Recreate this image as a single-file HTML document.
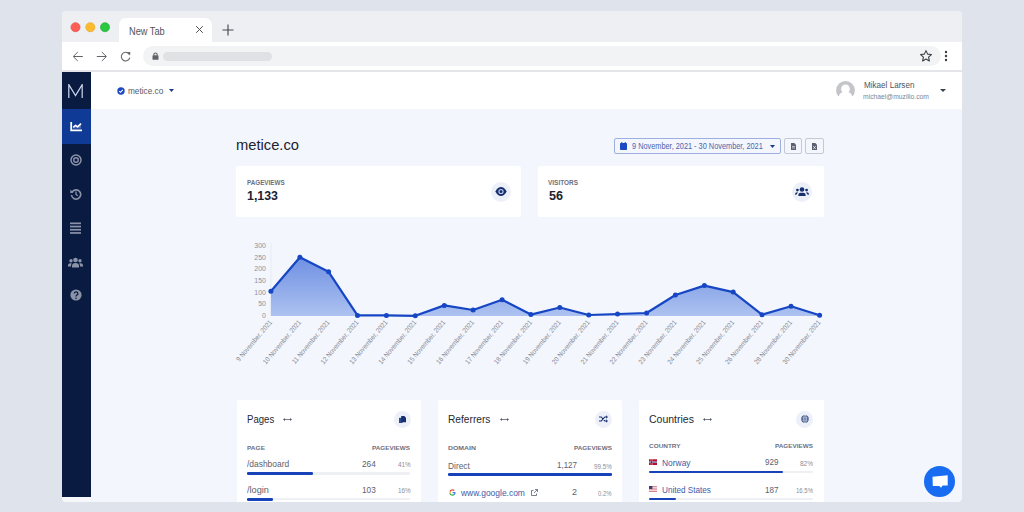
<!DOCTYPE html>
<html><head><meta charset="utf-8">
<style>
*{margin:0;padding:0;box-sizing:border-box}
html,body{width:1024px;height:512px;overflow:hidden;background:#dfe3eb;font-family:"Liberation Sans",sans-serif;position:relative}
.a{position:absolute}
.t{position:absolute;white-space:nowrap;line-height:normal;transform-origin:0 0}
</style></head><body>
<div style="position:absolute;left:0;top:0;width:1024px;height:512px;clip-path:inset(11px 62px 10px 62px round 3px 3px 4px 4px)">
<div class="a" style="left:62px;top:11px;width:900px;height:491px;background:#f3f6fd;border-radius:3px 3px 4px 4px"></div>
<div class="a" style="left:62px;top:11px;width:900px;height:31px;background:#edeff2;border-radius:3px 3px 0 0"></div>
<svg class="a" style="left:62px;top:12px;" width="60" height="30" viewBox="0 0 60 30"><circle cx="13.5" cy="15.2" r="4.55" fill="#fd5f57" stroke="#e2463f" stroke-width="0.6"/><circle cx="28.299999999999997" cy="15.2" r="4.55" fill="#febb2e" stroke="#e1a116" stroke-width="0.6"/><circle cx="43" cy="15.2" r="4.55" fill="#28c840" stroke="#1aac2c" stroke-width="0.6"/></svg>
<div class="a" style="left:119px;top:17.5px;width:93px;height:24.5px;background:#fff;border-radius:7px 7px 0 0"></div>
<div class="t" style="left:129.30px;top:25.55px;font-size:10px;color:#505459;font-weight:normal;transform:scaleX(0.9213);">New Tab</div>
<svg class="a" style="left:195px;top:25px;" width="9" height="9" viewBox="0 0 9 9"><path d="M1.2 1.2L7.8 7.8M7.8 1.2L1.2 7.8" stroke="#45494e" stroke-width="0.95"/></svg>
<svg class="a" style="left:222px;top:24px;" width="12" height="12" viewBox="0 0 12 12"><path d="M6 0.5V11.5M0.5 6H11.5" stroke="#45494e" stroke-width="1.15"/></svg>
<div class="a" style="left:62px;top:42px;width:900px;height:28px;background:#fff;"></div>
<div class="a" style="left:62px;top:70px;width:900px;height:2px;background:#e3e5e9;"></div>
<svg class="a" style="left:72px;top:51px;" width="12" height="11" viewBox="0 0 12 11"><path d="M10.8 5.5H1.5M5.8 1L1.2 5.5L5.8 10" stroke="#606469" stroke-width="1.0" fill="none"/></svg>
<svg class="a" style="left:95.5px;top:51px;" width="12" height="11" viewBox="0 0 12 11"><path d="M0.8 5.5H10.1M5.8 1L10.4 5.5L5.8 10" stroke="#606469" stroke-width="1.0" fill="none"/></svg>
<svg class="a" style="left:120px;top:51px;" width="11" height="11" viewBox="0 0 11 11"><path d="M9.1 3.1A4.3 4.3 0 1 0 9.8 6.6" stroke="#606469" stroke-width="1.05" fill="none"/><path d="M6.8 1.2L10.3 0.9L10.1 4.6z" fill="#606469"/></svg>
<div class="a" style="left:142.5px;top:46px;width:798.5px;height:20px;background:#f1f3f4;border-radius:10px"></div>
<svg class="a" style="left:151.5px;top:52px;" width="7" height="8" viewBox="0 0 7 8"><rect x="0.5" y="3.3" width="6" height="4.5" rx="0.6" fill="#5f6368"/><path d="M1.9 3.6V2.6A1.6 1.6 0 0 1 5.1 2.6V3.6" stroke="#5f6368" stroke-width="1.1" fill="none"/></svg>
<div class="a" style="left:162.7px;top:51.8px;width:109.0px;height:8.800000000000004px;background:#dfe1e4;border-radius:5px"></div>
<svg class="a" style="left:919px;top:49px;" width="14" height="14" viewBox="0 0 24 24"><path d="M12 2.8l2.8 6 6.5.7-4.9 4.4 1.4 6.5L12 17.1l-5.8 3.3 1.4-6.5-4.9-4.4 6.5-.7z" stroke="#3c4043" stroke-width="1.9" fill="none" stroke-linejoin="round"/></svg>
<svg class="a" style="left:944px;top:50px;" width="4" height="12" viewBox="0 0 4 12"><circle cx="2" cy="2" r="1.2" fill="#3c4043"/><circle cx="2" cy="6" r="1.2" fill="#3c4043"/><circle cx="2" cy="10" r="1.2" fill="#3c4043"/></svg>
<div class="a" style="left:62px;top:72px;width:29px;height:425px;background:#0a1b41;"></div>
<div class="a" style="left:62px;top:72px;width:29px;height:37px;background:#0a1b41;"></div>
<svg class="a" style="left:68px;top:84px;" width="15" height="14" viewBox="0 0 15 14"><path d="M0.8 14V0.6L7.5 11.5L14.2 0.6V14" stroke="#c9d1ea" stroke-width="1.25" fill="none" stroke-linejoin="miter"/></svg>
<div class="a" style="left:62px;top:109px;width:29px;height:35px;background:#0f3a96;"></div>
<svg class="a" style="left:69.5px;top:122px;" width="12.5" height="9.5" viewBox="0 0 12.5 9.5"><path d="M1.2 0V8.3H12" stroke="#fff" stroke-width="1.8" fill="none"/><path d="M3.2 5.4L5.6 3.3L7.6 4.8L11 1.6" stroke="#fff" stroke-width="1.6" fill="none" stroke-linejoin="round"/><path d="M3.2 6.2L5.6 4.2L7.6 5.6L11 2.5V6.6H3.2z" fill="#fff" opacity="0.25"/></svg>
<svg class="a" style="left:69.5px;top:154px;" width="12" height="12" viewBox="0 0 12 12"><circle cx="6" cy="6" r="5" stroke="#8b93a8" stroke-width="1.5" fill="none"/><circle cx="6" cy="6" r="2.3" stroke="#8b93a8" stroke-width="1.4" fill="none"/></svg>
<svg class="a" style="left:69.5px;top:187.5px;" width="12" height="12" viewBox="0 0 12 12"><path d="M2.2 4A4.6 4.6 0 1 1 1.5 7" stroke="#8b93a8" stroke-width="1.6" fill="none"/><path d="M0.3 1.5L3.5 4.8L0.3 5.2z" fill="#8b93a8"/><path d="M6 3.5V6.5L7.8 7.8" stroke="#8b93a8" stroke-width="1.3" fill="none"/></svg>
<svg class="a" style="left:70px;top:222px;" width="11" height="12" viewBox="0 0 11 12"><rect x="0" y="0.5" width="11" height="1.7" fill="#8b93a8"/><rect x="0" y="3.7" width="11" height="1.7" fill="#8b93a8"/><rect x="0" y="6.9" width="11" height="1.7" fill="#8b93a8"/><rect x="0" y="10.1" width="11" height="1.7" fill="#8b93a8"/></svg>
<svg class="a" style="left:68px;top:257px;" width="15" height="11" viewBox="0 0 15 11"><circle cx="7.5" cy="3" r="2.3" fill="#8b93a8"/><circle cx="3" cy="3.8" r="1.7" fill="#8b93a8"/><circle cx="12" cy="3.8" r="1.7" fill="#8b93a8"/><path d="M4 10.5V9A3.5 3 0 0 1 11 9V10.5z" fill="#8b93a8"/><path d="M0 9.5V8.5A2.5 2.2 0 0 1 3.8 6.5A4 4 0 0 0 3 9.5z" fill="#8b93a8"/><path d="M15 9.5V8.5A2.5 2.2 0 0 0 11.2 6.5A4 4 0 0 1 12 9.5z" fill="#8b93a8"/></svg>
<svg class="a" style="left:70px;top:289px;" width="12" height="12" viewBox="0 0 12 12"><circle cx="6" cy="6" r="5.6" fill="#8b93a8"/><path d="M4.3 4.6A1.8 1.7 0 1 1 6.8 6.2C6.2 6.6 6 6.9 6 7.5" stroke="#0a1b41" stroke-width="1.3" fill="none"/><circle cx="6" cy="9.2" r="0.8" fill="#0a1b41"/></svg>
<div class="a" style="left:91px;top:72px;width:871px;height:37px;background:#fff;"></div>
<svg class="a" style="left:117px;top:86.8px;" width="8" height="8" viewBox="0 0 8 8"><circle cx="4" cy="4" r="3.7" fill="#1d48c4"/><path d="M2.2 4.1L3.5 5.3L5.8 2.9" stroke="#fff" stroke-width="1.1" fill="none"/></svg>
<div class="t" style="left:128.00px;top:84.81px;font-size:9.6px;color:#545a66;font-weight:normal;transform:scaleX(0.8591);">metice.co</div>
<svg class="a" style="left:168.5px;top:88.5px;" width="5" height="3" viewBox="0 0 5 3"><path d="M0 0H5L2.5 3z" fill="#1b3a8c"/></svg>
<svg class="a" style="left:836px;top:80.5px;" width="19" height="19" viewBox="0 0 19 19"><circle cx="9.5" cy="9.4" r="9.4" fill="#c4c5c8"/><rect x="0" y="15.3" width="19" height="4" fill="#fff"/><circle cx="9.5" cy="7.9" r="4.4" fill="#fff"/><path d="M2.8 16A6.7 5.5 0 0 1 16.2 16z" fill="#fff"/></svg>
<div class="t" style="left:863.50px;top:79.97px;font-size:9.2px;color:#50545d;font-weight:normal;transform:scaleX(0.8818);">Mikael Larsen</div>
<div class="t" style="left:863.00px;top:92.40px;font-size:7.4px;color:#80848e;font-weight:normal;transform:scaleX(0.9157);">michael@muzillo.com</div>
<svg class="a" style="left:940px;top:88.5px;" width="6" height="3" viewBox="0 0 6 3"><path d="M0 0H6L3 3z" fill="#3c4049"/></svg>
<div class="t" style="left:236.00px;top:136.47px;font-size:15.5px;color:#1e2230;font-weight:normal;transform:scaleX(0.9497);">metice.co</div>
<div class="a" style="left:613.5px;top:137.9px;width:167.5px;height:15.900000000000006px;background:#f3f6fd;border:1px solid #9cafe0;border-radius:2px"></div>
<svg class="a" style="left:619.5px;top:141.5px;" width="7" height="8" viewBox="0 0 7 8"><rect x="0" y="1" width="7" height="7" rx="0.8" fill="#1d48c4"/><rect x="1.3" y="0" width="1" height="2" fill="#1d48c4"/><rect x="4.7" y="0" width="1" height="2" fill="#1d48c4"/></svg>
<div class="t" style="left:632.00px;top:141.58px;font-size:8.2px;color:#4a66b0;font-weight:normal;transform:scaleX(0.8980);">9 November, 2021 - 30 November, 2021</div>
<svg class="a" style="left:770px;top:145px;" width="5" height="3" viewBox="0 0 5 3"><path d="M0 0H5L2.5 3z" fill="#1b3a8c"/></svg>
<div class="a" style="left:783.7px;top:137.9px;width:18.299999999999955px;height:15.900000000000006px;background:#f3f6fd;border:1px solid #c3c9d6;border-radius:2px"></div>
<div class="a" style="left:805px;top:137.9px;width:18.5px;height:15.900000000000006px;background:#f3f6fd;border:1px solid #c3c9d6;border-radius:2px"></div>
<svg class="a" style="left:790.5px;top:142.8px;" width="5" height="7" viewBox="0 0 5 7"><path d="M0 0H3.3L5 1.7V7H0z" fill="#5b6170"/><path d="M1 3.5H4M1 5H4" stroke="#f3f6fd" stroke-width="0.6"/></svg>
<svg class="a" style="left:811.5px;top:142.8px;" width="5" height="7" viewBox="0 0 5 7"><path d="M0 0H3.3L5 1.7V7H0z" fill="#5b6170"/><path d="M1.2 3L3.8 6M3.8 3L1.2 6" stroke="#f3f6fd" stroke-width="0.7"/></svg>
<div class="a" style="left:236px;top:166.4px;width:285.4px;height:50.5px;background:#fff;border-radius:2px"></div>
<div class="t" style="left:246.50px;top:178.92px;font-size:6.5px;color:#6c7080;font-weight:bold;transform:scaleX(0.9665);">PAGEVIEWS</div>
<div class="t" style="left:247.00px;top:188.54px;font-size:12px;color:#1e2230;font-weight:bold;transform:scaleX(1.0313);">1,133</div>
<div class="a" style="left:490.5px;top:181.5px;width:20px;height:20px;border-radius:50%;background:#edf0f8"></div>
<div class="a" style="left:537.5px;top:166.4px;width:286.0px;height:50.5px;background:#fff;border-radius:2px"></div>
<div class="t" style="left:548.00px;top:178.92px;font-size:6.5px;color:#6c7080;font-weight:bold;transform:scaleX(0.9926);">VISITORS</div>
<div class="t" style="left:548.50px;top:188.54px;font-size:12px;color:#1e2230;font-weight:bold;transform:scaleX(1.0511);">56</div>
<div class="a" style="left:791.5px;top:181.5px;width:20px;height:20px;border-radius:50%;background:#edf0f8"></div>
<svg class="a" style="left:494.5px;top:187px;" width="12" height="9" viewBox="0 0 12 9"><path d="M0.3 4.5C2 1.2 4 0 6 0S10 1.2 11.7 4.5C10 7.8 8 9 6 9S2 7.8 0.3 4.5z" fill="#16306f"/><circle cx="6" cy="4.5" r="2.6" fill="#c7d0ea"/><circle cx="6" cy="4.5" r="1.5" fill="#16306f"/></svg>
<svg class="a" style="left:795.2px;top:186.6px;" width="14" height="9.5" viewBox="0 0 15 10"><circle cx="7.5" cy="2.6" r="2.5" fill="#16306f"/><circle cx="2.6" cy="3.2" r="1.5" fill="#16306f"/><circle cx="12.4" cy="3.2" r="1.5" fill="#16306f"/><path d="M3.6 10V8.6A2.6 2.6 0 0 1 6.2 6H8.8A2.6 2.6 0 0 1 11.4 8.6V10z" fill="#16306f"/><path d="M0 8.2A2.4 2.4 0 0 1 2.4 5.6H3.2A3.8 3.8 0 0 0 2.2 7.6z" fill="#16306f"/><path d="M15 8.2A2.4 2.4 0 0 0 12.6 5.6H11.8A3.8 3.8 0 0 1 12.8 7.6z" fill="#16306f"/></svg>
<svg class="a" style="left:0;top:0" width="1024" height="512" viewBox="0 0 1024 512" font-family="Liberation Sans"><defs><linearGradient id="gf" x1="0" y1="0" x2="0" y2="1" gradientUnits="objectBoundingBox"><stop offset="0" stop-color="#6f90e3"/><stop offset="1" stop-color="#adc2f0"/></linearGradient></defs><text x="266" y="247.90" text-anchor="end" font-size="7" fill="#8e929b">300</text><text x="266" y="259.58" text-anchor="end" font-size="7" fill="#8e929b">250</text><text x="266" y="271.27" text-anchor="end" font-size="7" fill="#8e929b">200</text><text x="266" y="282.95" text-anchor="end" font-size="7" fill="#8e929b">150</text><text x="266" y="294.63" text-anchor="end" font-size="7" fill="#8e929b">100</text><text x="266" y="306.32" text-anchor="end" font-size="7" fill="#8e929b">50</text><text x="266" y="318.00" text-anchor="end" font-size="7" fill="#8e929b">0</text><line x1="270.9" y1="243" x2="270.9" y2="316" stroke="#e6e8ee" stroke-width="0.7"/><path d="M270.9,316.0 L270.9,291.3 299.9,257.2 328.6,271.8 357.5,315.4 386.4,315.4 415.3,315.8 444.3,305.4 473.1,310 502.1,299.8 530.9,314.6 559.8,307.5 588.75,315 617.5,314 646.6,313 675.4,295 704.4,285.6 733.2,292.1 762,314.7 791,306.2 819.6,315.2 L819.6,316.0 Z" fill="url(#gf)"/><polyline points="270.9,291.3 299.9,257.2 328.6,271.8 357.5,315.4 386.4,315.4 415.3,315.8 444.3,305.4 473.1,310 502.1,299.8 530.9,314.6 559.8,307.5 588.75,315 617.5,314 646.6,313 675.4,295 704.4,285.6 733.2,292.1 762,314.7 791,306.2 819.6,315.2" fill="none" stroke="#1646c4" stroke-width="2.2" stroke-linejoin="round"/><circle cx="270.9" cy="291.3" r="2.5" fill="#1646c4"/><circle cx="299.9" cy="257.2" r="2.5" fill="#1646c4"/><circle cx="328.6" cy="271.8" r="2.5" fill="#1646c4"/><circle cx="357.5" cy="315.4" r="2.5" fill="#1646c4"/><circle cx="386.4" cy="315.4" r="2.5" fill="#1646c4"/><circle cx="415.3" cy="315.8" r="2.5" fill="#1646c4"/><circle cx="444.3" cy="305.4" r="2.5" fill="#1646c4"/><circle cx="473.1" cy="310" r="2.5" fill="#1646c4"/><circle cx="502.1" cy="299.8" r="2.5" fill="#1646c4"/><circle cx="530.9" cy="314.6" r="2.5" fill="#1646c4"/><circle cx="559.8" cy="307.5" r="2.5" fill="#1646c4"/><circle cx="588.75" cy="315" r="2.5" fill="#1646c4"/><circle cx="617.5" cy="314" r="2.5" fill="#1646c4"/><circle cx="646.6" cy="313" r="2.5" fill="#1646c4"/><circle cx="675.4" cy="295" r="2.5" fill="#1646c4"/><circle cx="704.4" cy="285.6" r="2.5" fill="#1646c4"/><circle cx="733.2" cy="292.1" r="2.5" fill="#1646c4"/><circle cx="762" cy="314.7" r="2.5" fill="#1646c4"/><circle cx="791" cy="306.2" r="2.5" fill="#1646c4"/><circle cx="819.6" cy="315.2" r="2.5" fill="#1646c4"/><text transform="translate(272.40,322.5) rotate(-50)" text-anchor="end" font-size="6.9" textLength="51.47" lengthAdjust="spacingAndGlyphs" fill="#868a94">9 November, 2021</text><text transform="translate(301.40,322.5) rotate(-50)" text-anchor="end" font-size="6.9" textLength="55.00" lengthAdjust="spacingAndGlyphs" fill="#868a94">10 November, 2021</text><text transform="translate(330.10,322.5) rotate(-50)" text-anchor="end" font-size="6.9" textLength="54.53" lengthAdjust="spacingAndGlyphs" fill="#868a94">11 November, 2021</text><text transform="translate(359.00,322.5) rotate(-50)" text-anchor="end" font-size="6.9" textLength="55.00" lengthAdjust="spacingAndGlyphs" fill="#868a94">12 November, 2021</text><text transform="translate(387.90,322.5) rotate(-50)" text-anchor="end" font-size="6.9" textLength="55.00" lengthAdjust="spacingAndGlyphs" fill="#868a94">13 November, 2021</text><text transform="translate(416.80,322.5) rotate(-50)" text-anchor="end" font-size="6.9" textLength="55.00" lengthAdjust="spacingAndGlyphs" fill="#868a94">14 November, 2021</text><text transform="translate(445.80,322.5) rotate(-50)" text-anchor="end" font-size="6.9" textLength="55.00" lengthAdjust="spacingAndGlyphs" fill="#868a94">15 November, 2021</text><text transform="translate(474.60,322.5) rotate(-50)" text-anchor="end" font-size="6.9" textLength="55.00" lengthAdjust="spacingAndGlyphs" fill="#868a94">16 November, 2021</text><text transform="translate(503.60,322.5) rotate(-50)" text-anchor="end" font-size="6.9" textLength="55.00" lengthAdjust="spacingAndGlyphs" fill="#868a94">17 November, 2021</text><text transform="translate(532.40,322.5) rotate(-50)" text-anchor="end" font-size="6.9" textLength="55.00" lengthAdjust="spacingAndGlyphs" fill="#868a94">18 November, 2021</text><text transform="translate(561.30,322.5) rotate(-50)" text-anchor="end" font-size="6.9" textLength="55.00" lengthAdjust="spacingAndGlyphs" fill="#868a94">19 November, 2021</text><text transform="translate(590.25,322.5) rotate(-50)" text-anchor="end" font-size="6.9" textLength="55.00" lengthAdjust="spacingAndGlyphs" fill="#868a94">20 November, 2021</text><text transform="translate(619.00,322.5) rotate(-50)" text-anchor="end" font-size="6.9" textLength="55.00" lengthAdjust="spacingAndGlyphs" fill="#868a94">21 November, 2021</text><text transform="translate(648.10,322.5) rotate(-50)" text-anchor="end" font-size="6.9" textLength="55.00" lengthAdjust="spacingAndGlyphs" fill="#868a94">22 November, 2021</text><text transform="translate(676.90,322.5) rotate(-50)" text-anchor="end" font-size="6.9" textLength="55.00" lengthAdjust="spacingAndGlyphs" fill="#868a94">23 November, 2021</text><text transform="translate(705.90,322.5) rotate(-50)" text-anchor="end" font-size="6.9" textLength="55.00" lengthAdjust="spacingAndGlyphs" fill="#868a94">24 November, 2021</text><text transform="translate(734.70,322.5) rotate(-50)" text-anchor="end" font-size="6.9" textLength="55.00" lengthAdjust="spacingAndGlyphs" fill="#868a94">25 November, 2021</text><text transform="translate(763.50,322.5) rotate(-50)" text-anchor="end" font-size="6.9" textLength="55.00" lengthAdjust="spacingAndGlyphs" fill="#868a94">26 November, 2021</text><text transform="translate(792.50,322.5) rotate(-50)" text-anchor="end" font-size="6.9" textLength="55.00" lengthAdjust="spacingAndGlyphs" fill="#868a94">28 November, 2021</text><text transform="translate(821.10,322.5) rotate(-50)" text-anchor="end" font-size="6.9" textLength="55.00" lengthAdjust="spacingAndGlyphs" fill="#868a94">30 November, 2021</text></svg>
<div class="a" style="left:236.5px;top:400px;width:184.5px;height:102px;background:#fff;border-radius:2px 2px 0 0"></div>
<div class="t" style="left:247.20px;top:414.39px;font-size:10.4px;color:#252932;font-weight:normal;transform:scaleX(0.9225);">Pages</div>
<svg class="a" style="left:283.4px;top:417px;" width="9" height="5" viewBox="0 0 9 5"><path d="M1.8 2.5H7.2" stroke="#555a66" stroke-width="0.8"/><path d="M0 2.5L2 0.9V4.1z M9 2.5L7 0.9V4.1z" fill="#555a66"/></svg>
<div class="a" style="left:394.0px;top:410.7px;width:17px;height:17px;border-radius:50%;background:#edf0f8"></div>
<svg class="a" style="left:398.6px;top:415.5px" width="7" height="7.5" viewBox="0 0 7 7.5"><path d="M0 1.8H3.5V7.5H0z" fill="#2c4a8f"/><path d="M2.2 0H5.3L7 1.7V6.3H2.2z" fill="#16306f"/></svg>
<div class="t" style="left:247.20px;top:444.56px;font-size:5.9px;color:#6c7080;font-weight:bold;transform:scaleX(1.1054);">PAGE</div>
<div class="t" style="left:372.30px;top:444.56px;font-size:5.9px;color:#6c7080;font-weight:bold;transform:scaleX(1.0761);">PAGEVIEWS</div>
<div class="t" style="left:247.20px;top:459.32px;font-size:8.6px;color:#5d616c;font-weight:normal;transform:scaleX(0.9804);">/dashboard</div>
<div class="t" style="left:361.70px;top:459.12px;font-size:8.6px;color:#5d616c;font-weight:normal;transform:scaleX(0.9609);">264</div>
<div class="t" style="left:397.60px;top:461.31px;font-size:6.4px;color:#8a8e98;font-weight:normal;transform:scaleX(0.9922);">41%</div>
<div class="a" style="left:247.2px;top:472.40000000000003px;width:163.10000000000002px;height:2.3999999999999773px;background:#eef0f4;border-radius:1.2px"></div>
<div class="a" style="left:247.2px;top:472.3px;width:66.0555px;height:2.6000000000000227px;background:#1843b8;border-radius:1.3px"></div>
<div class="t" style="left:247.20px;top:485.32px;font-size:8.6px;color:#5d616c;font-weight:normal;transform:scaleX(1.0655);">/login</div>
<div class="t" style="left:361.70px;top:485.12px;font-size:8.6px;color:#5d616c;font-weight:normal;transform:scaleX(0.9609);">103</div>
<div class="t" style="left:397.60px;top:487.31px;font-size:6.4px;color:#8a8e98;font-weight:normal;transform:scaleX(0.9922);">16%</div>
<div class="a" style="left:247.2px;top:498.1px;width:163.10000000000002px;height:2.3999999999999773px;background:#eef0f4;border-radius:1.2px"></div>
<div class="a" style="left:247.2px;top:498.0px;width:25.60669999999999px;height:2.6000000000000227px;background:#1843b8;border-radius:1.3px"></div>
<div class="a" style="left:437.5px;top:400px;width:184.89999999999998px;height:102px;background:#fff;border-radius:2px 2px 0 0"></div>
<div class="t" style="left:448.20px;top:414.39px;font-size:10.4px;color:#252932;font-weight:normal;transform:scaleX(0.9800);">Referrers</div>
<svg class="a" style="left:499.7px;top:417px;" width="9" height="5" viewBox="0 0 9 5"><path d="M1.8 2.5H7.2" stroke="#555a66" stroke-width="0.8"/><path d="M0 2.5L2 0.9V4.1z M9 2.5L7 0.9V4.1z" fill="#555a66"/></svg>
<div class="a" style="left:594.6px;top:410.7px;width:17px;height:17px;border-radius:50%;background:#edf0f8"></div>
<svg class="a" style="left:598.6px;top:415.3px" width="9" height="8" viewBox="0 0 10 9"><path d="M0 2.2H2.5L6.5 6.8H8.5M0 6.8H2.5L6.5 2.2H8.5" stroke="#16306f" stroke-width="1.3" fill="none"/><path d="M8 0.3L10 2.2L8 4.1z M8 4.9L10 6.8L8 8.7z" fill="#16306f"/></svg>
<div class="t" style="left:448.20px;top:444.56px;font-size:5.9px;color:#6c7080;font-weight:bold;transform:scaleX(1.1703);">DOMAIN</div>
<div class="t" style="left:573.70px;top:444.56px;font-size:5.9px;color:#6c7080;font-weight:bold;transform:scaleX(1.0761);">PAGEVIEWS</div>
<div class="t" style="left:448.20px;top:460.62px;font-size:8.6px;color:#5d616c;font-weight:normal;transform:scaleX(0.9712);">Direct</div>
<div class="t" style="left:556.90px;top:460.42px;font-size:8.6px;color:#5d616c;font-weight:normal;transform:scaleX(0.9284);">1,127</div>
<div class="t" style="left:594.00px;top:462.61px;font-size:6.4px;color:#8a8e98;font-weight:normal;transform:scaleX(0.9755);">99.5%</div>
<div class="a" style="left:448.2px;top:473.3px;width:163.49999999999994px;height:2.3999999999999773px;background:#eef0f4;border-radius:1.2px"></div>
<div class="a" style="left:448.2px;top:473.2px;width:163.49999999999994px;height:2.6000000000000227px;background:#1843b8;border-radius:1.3px"></div>
<svg class="a" style="left:449.0px;top:488.8px" width="7" height="7" viewBox="0 0 24 24"><path d="M22.5 12.2c0-.8-.1-1.5-.2-2.2H12v4.3h5.9c-.3 1.4-1 2.5-2.2 3.3v2.7h3.6c2-1.9 3.2-4.7 3.2-8.1z" fill="#4285F4"/><path d="M12 23c3 0 5.5-1 7.3-2.7l-3.6-2.7c-1 .7-2.2 1.1-3.7 1.1-2.9 0-5.3-1.9-6.2-4.5H2.1v2.8C3.9 20.5 7.7 23 12 23z" fill="#34A853"/><path d="M5.8 14.2c-.2-.7-.4-1.4-.4-2.2s.1-1.5.4-2.2V7H2.1C1.4 8.5 1 10.2 1 12s.4 3.5 1.1 5l3.7-2.8z" fill="#FBBC05"/><path d="M12 5.4c1.6 0 3.1.6 4.2 1.7l3.2-3.2C17.5 2.1 15 1 12 1 7.7 1 3.9 3.5 2.1 7l3.7 2.8c.9-2.6 3.3-4.4 6.2-4.4z" fill="#EA4335"/></svg>
<svg class="a" style="left:531.0px;top:488.8px" width="7" height="7" viewBox="0 0 7 7"><path d="M4 0.5H6.5V3M6.5 0.5L3 4M5.5 4.5V6.5H0.5V1.5H2.5" stroke="#6c7080" stroke-width="0.9" fill="none"/></svg>
<div class="t" style="left:461.04px;top:487.52px;font-size:8.6px;color:#3f5aa6;font-weight:normal;transform:scaleX(0.9837);">www.google.com</div>
<div class="t" style="left:571.90px;top:487.32px;font-size:8.6px;color:#5d616c;font-weight:normal;transform:scaleX(1.0476);">2</div>
<div class="t" style="left:598.20px;top:489.51px;font-size:6.4px;color:#8a8e98;font-weight:normal;transform:scaleX(0.9252);">0.2%</div>
<div class="a" style="left:448.2px;top:502.8px;width:163.49999999999994px;height:2.3999999999999773px;background:#eef0f4;border-radius:1.2px"></div>
<div class="a" style="left:448.2px;top:502.7px;width:0.6539999999999964px;height:2.6000000000000227px;background:#1843b8;border-radius:1.3px"></div>
<div class="a" style="left:638.5px;top:400px;width:185.10000000000002px;height:102px;background:#fff;border-radius:2px 2px 0 0"></div>
<div class="t" style="left:649.20px;top:414.39px;font-size:10.4px;color:#252932;font-weight:normal;transform:scaleX(1.0110);">Countries</div>
<svg class="a" style="left:703.2px;top:417px;" width="9" height="5" viewBox="0 0 9 5"><path d="M1.8 2.5H7.2" stroke="#555a66" stroke-width="0.8"/><path d="M0 2.5L2 0.9V4.1z M9 2.5L7 0.9V4.1z" fill="#555a66"/></svg>
<div class="a" style="left:796.0px;top:410.7px;width:17px;height:17px;border-radius:50%;background:#edf0f8"></div>
<svg class="a" style="left:800.5px;top:415.2px" width="8" height="8" viewBox="0 0 10 10"><circle cx="5" cy="5" r="4.6" fill="#16306f"/><path d="M0.5 5H9.5M5 0.5V9.5M1.3 2.8H8.7M1.3 7.2H8.7" stroke="#edf0f8" stroke-width="0.7"/><ellipse cx="5" cy="5" rx="2" ry="4.6" stroke="#edf0f8" stroke-width="0.7" fill="none"/></svg>
<div class="t" style="left:649.20px;top:442.76px;font-size:5.9px;color:#6c7080;font-weight:bold;transform:scaleX(1.0919);">COUNTRY</div>
<div class="t" style="left:774.90px;top:442.76px;font-size:5.9px;color:#6c7080;font-weight:bold;transform:scaleX(1.0761);">PAGEVIEWS</div>
<svg class="a" style="left:649.0px;top:458.90000000000003px" width="8" height="6.4" viewBox="0 0 22 16"><rect width="22" height="16" fill="#ba0c2f"/><path d="M0 8H22M7 0V16" stroke="#fff" stroke-width="4"/><path d="M0 8H22M7 0V16" stroke="#00205b" stroke-width="2"/></svg>
<div class="t" style="left:662.00px;top:457.52px;font-size:8.6px;color:#3f5aa6;font-weight:normal;transform:scaleX(0.9810);">Norway</div>
<div class="t" style="left:764.60px;top:457.32px;font-size:8.6px;color:#5d616c;font-weight:normal;transform:scaleX(0.9400);">929</div>
<div class="t" style="left:799.90px;top:459.51px;font-size:6.4px;color:#8a8e98;font-weight:normal;transform:scaleX(1.0156);">82%</div>
<div class="a" style="left:649.2px;top:470.8px;width:163.69999999999993px;height:2.3999999999999773px;background:#eef0f4;border-radius:1.2px"></div>
<div class="a" style="left:649.2px;top:470.7px;width:134.23399999999992px;height:2.6000000000000227px;background:#1843b8;border-radius:1.3px"></div>
<svg class="a" style="left:649.0px;top:486.20000000000005px" width="8" height="6.4" viewBox="0 0 19 15"><rect width="19" height="15" fill="#fff"/><path d="M0 1H19M0 5H19M0 9H19M0 13H19" stroke="#d06a77" stroke-width="2"/><rect width="8" height="7" fill="#3c3b6e"/></svg>
<div class="t" style="left:662.00px;top:484.82px;font-size:8.6px;color:#3f5aa6;font-weight:normal;transform:scaleX(0.9488);">United States</div>
<div class="t" style="left:764.60px;top:484.62px;font-size:8.6px;color:#5d616c;font-weight:normal;transform:scaleX(0.9400);">187</div>
<div class="t" style="left:795.90px;top:486.81px;font-size:6.4px;color:#8a8e98;font-weight:normal;transform:scaleX(0.9369);">16.5%</div>
<div class="a" style="left:649.2px;top:497.6px;width:163.69999999999993px;height:2.3999999999999773px;background:#eef0f4;border-radius:1.2px"></div>
<div class="a" style="left:649.2px;top:497.5px;width:27.01049999999998px;height:2.6000000000000227px;background:#1843b8;border-radius:1.3px"></div>
<div class="a" style="left:62px;top:497px;width:29px;height:5px;background:#f6f8fd;"></div>
<div class="a" style="left:924px;top:465.5px;width:31px;height:31px;border-radius:50%;background:#176cf2"></div>
<svg class="a" style="left:931.5px;top:474px;" width="16" height="14" viewBox="0 0 16 14"><path d="M0.5 2.8L15.7 1.2V11.6H10.6L9 13.8L7.4 11.9H0.8z" fill="#fff"/></svg>
</div></body></html>
